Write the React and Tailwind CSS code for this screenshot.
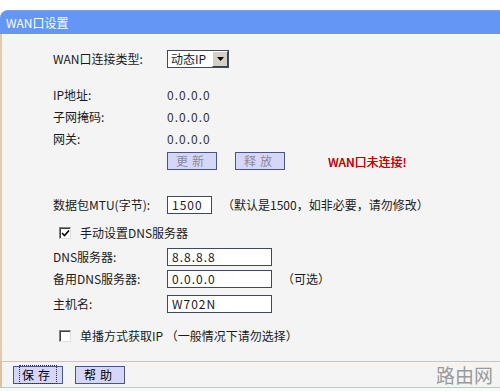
import React from "react";

const font = { fontFamily: '"Noto Sans CJK SC", "Liberation Sans", sans-serif' };

function Check({ checked }) {
  return (
    <span className="inline-flex h-[12px] w-[12px] items-center justify-center border border-t-[#808080] border-l-[#808080] border-r-[#e0e0e0] border-b-[#e0e0e0] bg-white shadow-[inset_1px_1px_0_#404040]">
      {checked && (
        <svg width="9" height="9" viewBox="0 0 9 9">
          <path d="M1 4 L3.5 6.5 L8 1.5" stroke="#000" strokeWidth="1.6" fill="none" />
        </svg>
      )}
    </span>
  );
}

function Btn({ children, disabled, focus, className = "" }) {
  return (
    <button
      className={
        "h-[18px] w-[50px] border border-[#4a5580] bg-[#d6d6f8] text-[12px] leading-none tracking-[4px] " +
        (disabled ? "text-[#8a8a9a] " : "text-black ") +
        className
      }
    >
      <span className={focus ? "border border-dotted border-[#333] px-[2px]" : ""}>{children}</span>
    </button>
  );
}

function Row({ label, children, className = "" }) {
  return (
    <div className={"flex items-center " + className}>
      <div className="w-[114px] shrink-0">{label}</div>
      {children}
    </div>
  );
}

function Input({ value, w }) {
  return (
    <div
      className="h-[18px] border border-[#3c4a60] bg-white px-[4px] text-[12px] leading-[16px] tracking-[1px]"
      style={{ width: w }}
    >
      {value}
    </div>
  );
}

export default function App() {
  return (
    <div className="h-[391px] w-[500px] overflow-hidden bg-white text-[12px] text-[#1a1a1a]" style={font}>
      <div className="h-[10px] bg-white" />
      <div className="flex h-[24px] items-center rounded-tl-[8px] border-t border-[#7a9ce0] bg-[#6496f5] pl-[6px] text-[12px] text-white">
        WAN口设置
      </div>
      <div className="h-[327px] border-l-2 border-[#e6c9a8] bg-[#f4f4f4] pl-[51px]">
        <Row label="WAN口连接类型:" className="pt-[16px]">
          <div className="flex h-[18px] w-[62px] items-center border border-[#3c4a60] bg-white">
            <span className="flex-1 pl-[3px]">动态IP</span>
            <span className="flex h-[16px] w-[16px] items-center justify-center border border-[#fff] border-r-[#404040] border-b-[#404040] bg-[#d4d0c8]">
              <svg width="7" height="4" viewBox="0 0 7 4">
                <path d="M0 0 H7 L3.5 4 Z" fill="#000" />
              </svg>
            </span>
          </div>
        </Row>
        <div className="mt-[16px]">
          <Row label="IP地址:" className="h-[22px]">
            <span className="tracking-[1px] text-[#333]">0.0.0.0</span>
          </Row>
          <Row label="子网掩码:" className="h-[22px]">
            <span className="tracking-[1px] text-[#333]">0.0.0.0</span>
          </Row>
          <Row label="网关:" className="h-[22px]">
            <span className="tracking-[1px] text-[#333]">0.0.0.0</span>
          </Row>
        </div>
        <Row label="" className="mt-[2px] h-[18px]">
          <Btn disabled>更新</Btn>
          <Btn disabled className="ml-[18px]">释放</Btn>
          <span className="ml-[43px] mt-[2px] text-[12px] text-[#c00000] [text-shadow:0.3px_0_0_#c00000]">WAN口未连接!</span>
        </Row>
        <Row label="数据包MTU(字节):" className="mt-[26px] h-[18px]">
          <Input value="1500" w={45} />
          <span className="ml-[10px]">（默认是1500，如非必要，请勿修改）</span>
        </Row>
        <div className="mt-[10px] flex h-[18px] items-center pl-[6px]">
          <Check checked />
          <span className="ml-[9px]">手动设置DNS服务器</span>
        </div>
        <Row label="DNS服务器:" className="mt-[6px] h-[18px]">
          <Input value="8.8.8.8" w={105} />
        </Row>
        <Row label="备用DNS服务器:" className="mt-[4px] h-[18px]">
          <Input value="0.0.0.0" w={105} />
          <span className="ml-[10px]">（可选）</span>
        </Row>
        <Row label="主机名:" className="mt-[7px] h-[18px]">
          <Input value="W702N" w={105} />
        </Row>
        <div className="mt-[14px] flex h-[18px] items-center pl-[6px]">
          <Check />
          <span className="ml-[9px]">单播方式获取IP （一般情况下请勿选择）</span>
        </div>
      </div>
      <div className="flex h-[27px] items-center border-y border-l-2 border-[#e2bf9c] bg-[#f4f4f4] pl-[11px]">
        <Btn focus>保存</Btn>
        <Btn className="ml-[12px]">帮助</Btn>
        <span className="ml-auto mr-[7px] text-[19px] leading-none text-[#9a9a9a]">路由网</span>
      </div>
      <div className="h-[3px] bg-[#fafafa]" />
    </div>
  );
}
